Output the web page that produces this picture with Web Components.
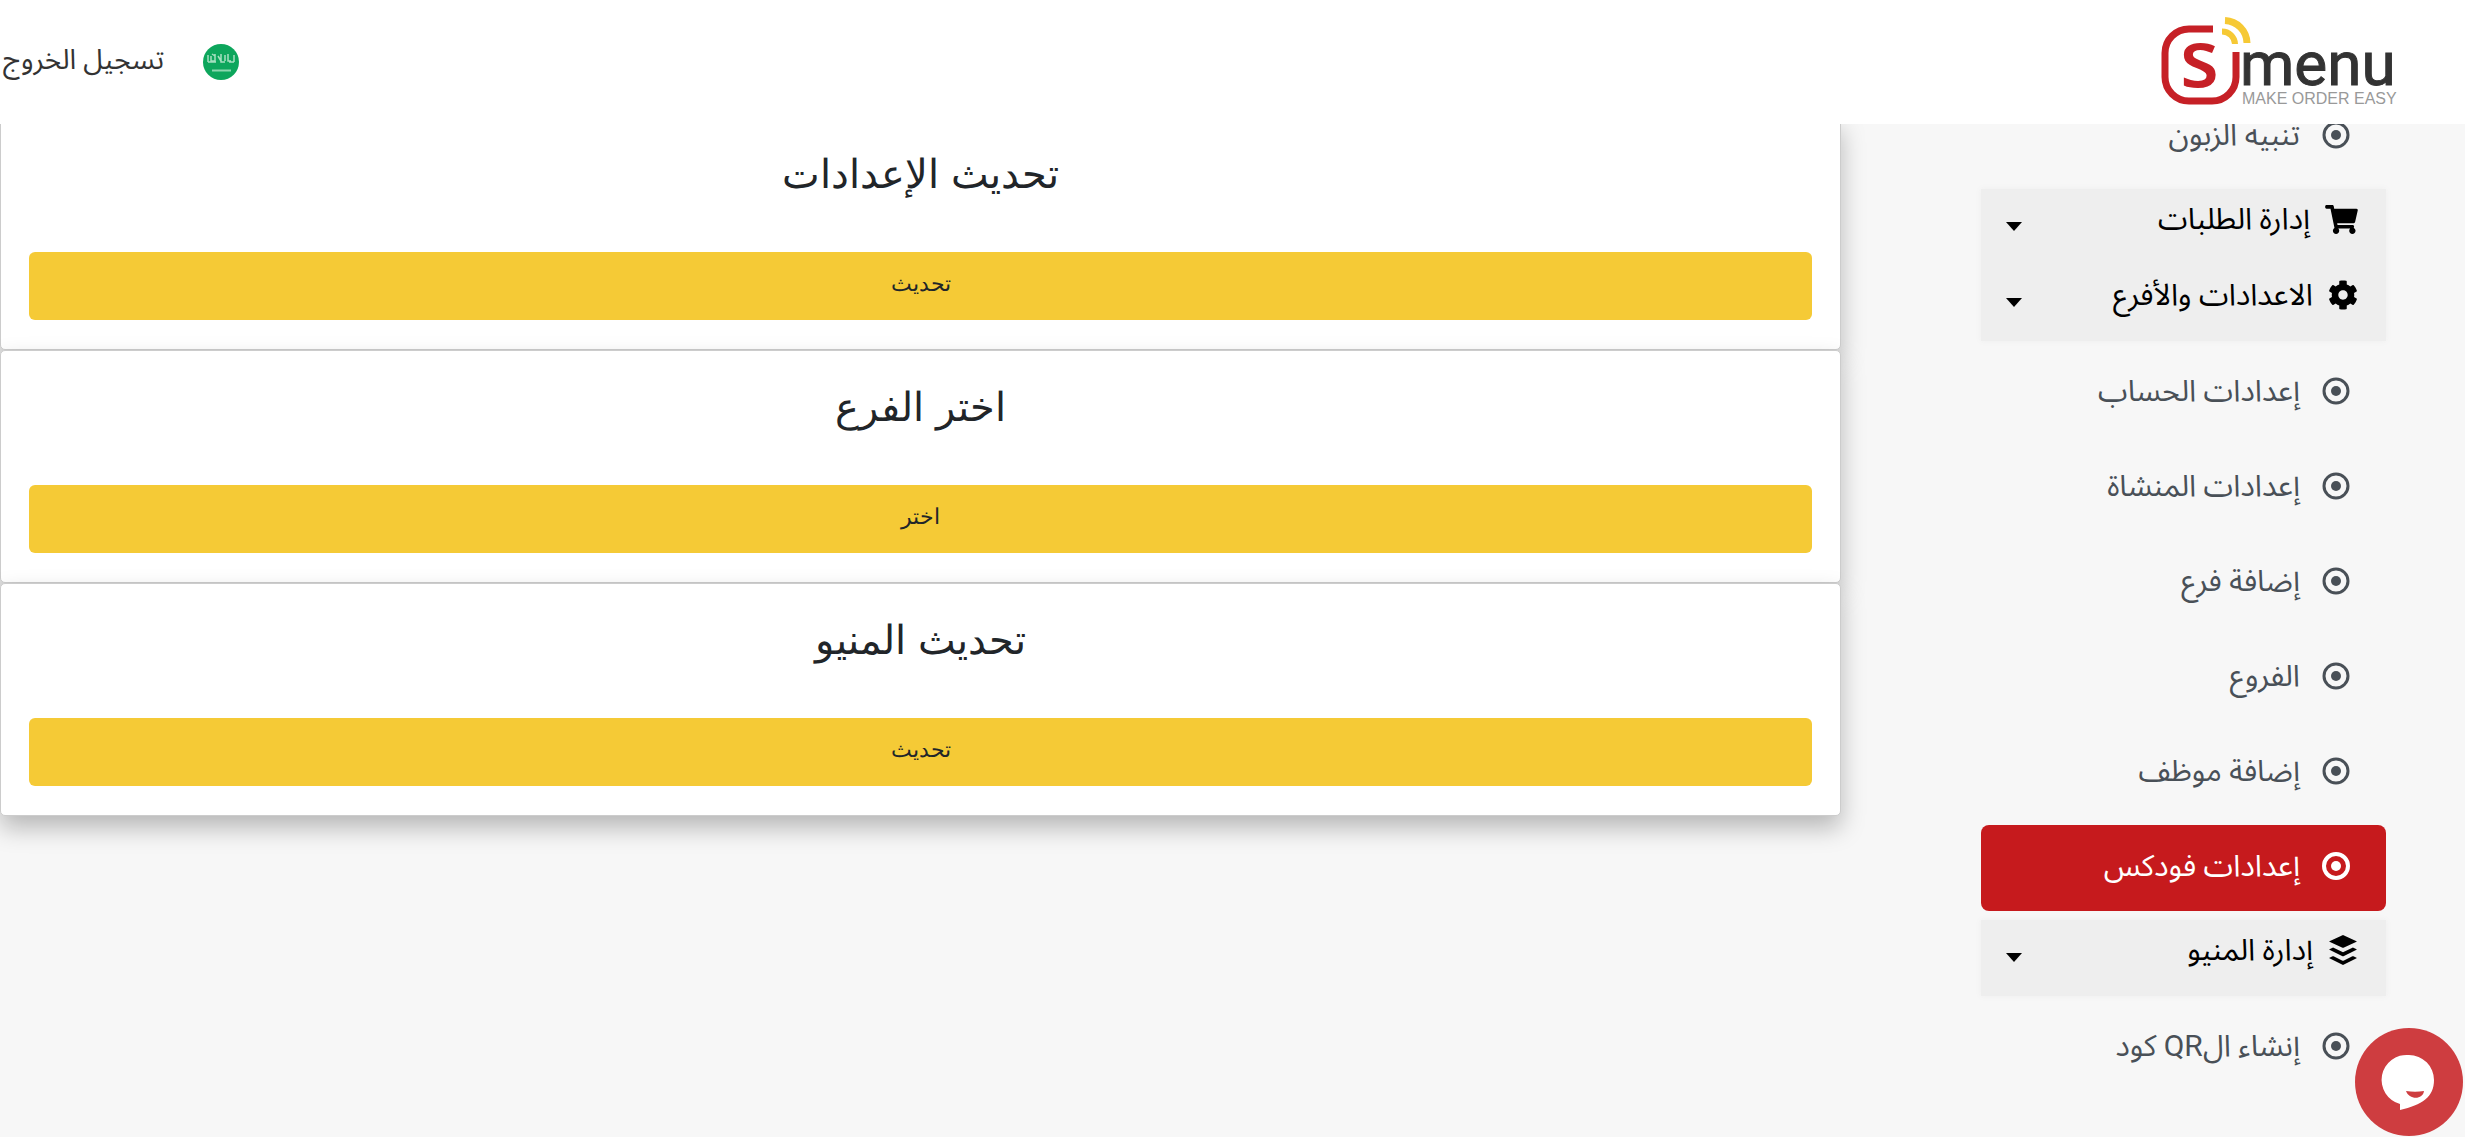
<!DOCTYPE html>
<html lang="ar" dir="rtl">
<head>
  <meta charset="UTF-8">
  <meta name="viewport" content="width=device-width, initial-scale=1.0">
  <title>Smenu</title>
  <style>
    body {
      margin: 0;
      background: #f7f7f7;
      color: #212529;
      font-family: Roboto, "Noto Sans Arabic", "DejaVu Sans", sans-serif;
    }
  </style>
</head>
<body>
  <smenu-header></smenu-header>

  <smenu-layout>
    <smenu-sidebar slot="sidebar">
      <nav-item>تنبيه الزبون</nav-item>
      <nav-group>
        <nav-toggle icon="cart">إدارة الطلبات</nav-toggle>
        <nav-toggle icon="cog">الاعدادات والأفرع</nav-toggle>
      </nav-group>
      <nav-item>إعدادات الحساب</nav-item>
      <nav-item>إعدادات المنشاة</nav-item>
      <nav-item>إضافة فرع</nav-item>
      <nav-item>الفروع</nav-item>
      <nav-item>إضافة موظف</nav-item>
      <nav-item active>إعدادات فودكس</nav-item>
      <nav-group>
        <nav-toggle icon="layers">إدارة المنيو</nav-toggle>
      </nav-group>
      <nav-item>إنشاء الQR كود</nav-item>
    </smenu-sidebar>

    <action-card action="تحديث">تحديث الإعدادات</action-card>
    <action-card action="اختر">اختر الفرع</action-card>
    <action-card action="تحديث">تحديث المنيو</action-card>
  </smenu-layout>

  <chat-bubble></chat-bubble>

  <script>
    const ICONS = {
      cart: `<svg width="33" height="29" viewBox="0 0 576 512"><path d="M528.12 301.319l47.273-208C578.806 78.301 567.391 64 551.99 64H159.208l-9.166-44.81C147.758 8.021 137.93 0 126.529 0H24C10.745 0 0 10.745 0 24v16c0 13.255 10.745 24 24 24h69.883l70.248 343.435C147.325 417.1 136 435.222 136 456c0 30.928 25.072 56 56 56s56-25.072 56-56c0-15.674-6.447-29.835-16.824-40h209.647C430.447 426.165 424 440.326 424 456c0 30.928 25.072 56 56 56s56-25.072 56-56c0-22.172-12.888-41.332-31.579-50.405l5.517-24.276c3.413-15.018-8.002-29.319-23.403-29.319H218.117l-6.545-32h293.145c11.206 0 20.92-7.754 23.403-18.681z"/></svg>`,
      cog: `<svg width="30" height="30" viewBox="0 0 512 512"><path d="M487.4 315.7l-42.6-24.6c4.3-23.2 4.3-47 0-70.2l42.6-24.6c4.9-2.8 7.1-8.6 5.5-14-11.1-35.6-30-67.8-54.7-94.6-3.8-4.1-10-5.1-14.8-2.3L380.8 110c-17.9-15.4-38.5-27.3-60.8-35.1V25.8c0-5.6-3.9-10.5-9.4-11.7-36.7-8.2-74.3-7.8-109.2 0-5.5 1.2-9.4 6.1-9.4 11.7V75c-22.2 7.9-42.8 19.8-60.8 35.1L88.7 85.5c-4.9-2.8-11-1.9-14.8 2.3-24.7 26.7-43.6 58.9-54.7 94.6-1.7 5.4.6 11.2 5.5 14L67.3 221c-4.3 23.2-4.3 47 0 70.2l-42.6 24.6c-4.9 2.8-7.1 8.6-5.5 14 11.1 35.6 30 67.8 54.7 94.6 3.8 4.1 10 5.1 14.8 2.3l42.6-24.6c17.9 15.4 38.5 27.3 60.8 35.1v49.2c0 5.6 3.9 10.5 9.4 11.7 36.7 8.2 74.3 7.8 109.2 0 5.5-1.2 9.4-6.1 9.4-11.7v-49.2c22.2-7.9 42.8-19.8 60.8-35.1l42.6 24.6c4.9 2.8 11 1.9 14.8-2.3 24.7-26.7 43.6-58.9 54.7-94.6 1.5-5.5-.7-11.3-5.6-14.1zM256 336c-44.1 0-80-35.9-80-80s35.9-80 80-80 80 35.9 80 80-35.9 80-80 80z"/></svg>`,
      layers: `<svg width="30" height="34" viewBox="0 0 448 512"><path d="M427.84 380.67l-196.5 97.82a18.6 18.6 0 0 1-14.67 0L20.16 380.67c-4-2-4-5.28 0-7.29L67.22 350a18.65 18.65 0 0 1 14.69 0l134.76 67a18.51 18.51 0 0 0 14.67 0l134.76-67a18.62 18.62 0 0 1 14.68 0l47.06 23.43c4.05 1.96 4.05 5.24 0 7.24zm0-136.53l-47.06-23.43a18.62 18.62 0 0 0-14.68 0l-134.76 67.08a18.68 18.68 0 0 1-14.67 0L81.91 220.71a18.65 18.65 0 0 0-14.69 0l-47.06 23.43c-4 2-4 5.29 0 7.31l196.51 97.8a18.6 18.6 0 0 0 14.67 0l196.5-97.8c4.05-2.02 4.05-5.3 0-7.31zM20.16 130.42l196.5 90.29a20.08 20.08 0 0 0 14.67 0l196.51-90.29c4-1.86 4-4.89 0-6.74L231.33 33.4a19.88 19.88 0 0 0-14.67 0l-196.5 90.28c-4.05 1.85-4.05 4.88 0 6.74z"/></svg>`
    };

    class SmenuHeader extends HTMLElement {
      constructor() {
        super();
        this.attachShadow({ mode: 'open' });
        this.shadowRoot.innerHTML = `
          <style>
            :host {
              position: fixed;
              top: 0;
              left: 0;
              right: 0;
              z-index: 10;
              display: block;
              background: #fff;
            }
            header {
              display: flex;
              justify-content: space-between;
              align-items: center;
              height: 124px;
              padding: 0 68px 0 3px;
            }
            .logo, .logo svg { display: block; }
            .user {
              display: flex;
              align-items: center;
              gap: 39px;
            }
            .user a {
              padding-bottom: 4px;
              color: #333;
              font-size: 28px;
              line-height: 40px;
              text-decoration: none;
            }
            .lang {
              display: block;
              padding: 0;
              border: 0;
              background: none;
              cursor: pointer;
            }
            .lang svg { display: block; }
          </style>
          <header>
            <a class="logo" href="#" aria-label="Smenu">
              <svg width="236" height="124" viewBox="0 -16 236 124" direction="ltr">
                <path d="M52 13H28A24 24 0 0 0 4 37V61A24 24 0 0 0 28 85H51A24 24 0 0 0 75 61V36" fill="none" stroke="#c62026" stroke-width="7"/>
                <path d="M61 15.500A13 13 0 0 1 74 28" fill="none" stroke="#f6c935" stroke-width="6"/>
                <path d="M64 4.500A23 23 0 0 1 86 27" fill="none" stroke="#f6c935" stroke-width="7"/>
                <text x="19" y="71" font-family="Open Sans" font-weight="600" font-size="80" fill="#c62026">s</text>
                <text x="79" y="69" font-family="Roboto" font-size="62" fill="#333" stroke="#333">menu</text>
                <text x="81" y="88" font-family="Liberation Sans" font-size="16" fill="#999">MAKE ORDER EASY</text>
              </svg>
            </a>
            <div class="user">
              <button class="lang" aria-label="العربية">
                <svg width="36" height="36" viewBox="0 0 36 36">
                  <circle cx="18" cy="18" r="18" fill="#0da65c"/>
                  <path d="M5 11v7M8 12v5h4M12 10v8M15 12l3 5M18 10v8h4M22 11v6M25 10v7h3M31 11v7M5 18h8M9 10l3 2M26 18h5" fill="none" stroke="#a5e0c0" stroke-width="1.500"/>
                  <path d="M9 26.500h19" stroke="#8ad6ae" stroke-width="2"/>
                </svg>
              </button>
              <a href="#">تسجيل الخروج</a>
            </div>
          </header>
        `;
      }
    }

    class SmenuLayout extends HTMLElement {
      constructor() {
        super();
        this.attachShadow({ mode: 'open' });
        this.shadowRoot.innerHTML = `
          <style>
            :host {
              display: grid;
              grid-template-columns: 405px minmax(0, 1fr);
              gap: 140px;
              align-items: start;
              padding-right: 79px;
            }
            main { padding-top: 117px; }
          </style>
          <slot name="sidebar"></slot>
          <main><slot></slot></main>
        `;
      }
    }

    class SmenuSidebar extends HTMLElement {
      constructor() {
        super();
        this.attachShadow({ mode: 'open' });
        this.shadowRoot.innerHTML = `
          <style>
            :host { display: block; padding-top: 94px; }
            nav {
              display: flex;
              flex-direction: column;
              gap: 9px;
            }
          </style>
          <nav><slot></slot></nav>
        `;
      }
    }

    class NavItem extends HTMLElement {
      constructor() {
        super();
        this.attachShadow({ mode: 'open' });
        this.shadowRoot.innerHTML = `
          <style>
            :host {
              --ring: 3;
              display: block;
              color: #495057;
            }
            :host([active]) {
              --ring: 4;
              color: #fff;
            }
            a {
              display: flex;
              align-items: center;
              gap: 22px;
              box-sizing: border-box;
              height: 86px;
              padding: 0 36px 4px;
              border-radius: 8px;
              color: inherit;
              font-size: 30px;
              line-height: 40px;
              text-decoration: none;
            }
            :host([active]) a { background: #c61a1d; }
            .ring { stroke-width: var(--ring); }
          </style>
          <a href="#">
            <svg width="28" height="28" viewBox="0 0 28 28">
              <circle class="ring" cx="14" cy="14" r="12" fill="none" stroke="currentColor"/>
              <circle cx="14" cy="14" r="5" fill="currentColor"/>
            </svg>
            <span><slot></slot></span>
          </a>
        `;
      }
    }

    class NavGroup extends HTMLElement {
      constructor() {
        super();
        this.attachShadow({ mode: 'open' });
        this.shadowRoot.innerHTML = `
          <style>
            :host {
              display: block;
              background: #eee;
              box-shadow: 0 0 6px #eee;
            }
          </style>
          <slot></slot>
        `;
      }
    }

    class NavToggle extends HTMLElement {
      constructor() {
        super();
        this.attachShadow({ mode: 'open' });
      }

      connectedCallback() {
        this.shadowRoot.innerHTML = `
          <style>
            :host { display: block; }
            button {
              display: flex;
              align-items: center;
              gap: 16px;
              width: 100%;
              height: 76px;
              padding: 0 28px 0 24px;
              border: 0;
              background: none;
              color: #000;
              font: inherit;
              font-size: 30px;
              line-height: 40px;
              cursor: pointer;
            }
            .label {
              display: flex;
              align-items: center;
              gap: 15px;
              flex: 1;
              padding-bottom: 16px;
            }
            svg { fill: currentColor; }
          </style>
          <button aria-expanded="false">
            <span class="label">
              ${ICONS[this.getAttribute('icon')]}
              <span><slot></slot></span>
            </span>
            <svg width="18" height="10" viewBox="0 0 18 10"><path d="M1 0h16l-8 9z"/></svg>
          </button>
        `;
      }
    }

    class ActionCard extends HTMLElement {
      constructor() {
        super();
        this.attachShadow({ mode: 'open' });
      }

      connectedCallback() {
        this.shadowRoot.innerHTML = `
          <style>
            :host {
              display: block;
              padding: 30px 28px 29px;
              border: 1px solid #ccc;
              border-radius: 5px;
              background: #fff;
              box-shadow: 0 12px 24px rgba(0, 0, 0, 0.26);
              font-family: "Liberation Sans", sans-serif;
              text-align: center;
            }
            h2 {
              margin: 0 0 52px;
              font-size: 40px;
              font-weight: 400;
              line-height: 52px;
            }
            :host, h2, button { color: #212529; }
            button {
              display: block;
              width: 100%;
              height: 68px;
              padding: 0 0 4px;
              border: 0;
              border-radius: 6px;
              background: #f5ca36;
              font: inherit;
              font-size: 22px;
              line-height: 36px;
              cursor: pointer;
            }
          </style>
          <h2><slot></slot></h2>
          <button>${this.getAttribute('action')}</button>
        `;
      }
    }

    class ChatBubble extends HTMLElement {
      constructor() {
        super();
        this.attachShadow({ mode: 'open' });
        this.shadowRoot.innerHTML = `
          <style>
            :host {
              position: fixed;
              right: 2px;
              bottom: 1px;
              z-index: 20;
            }
            button {
              display: block;
              width: 108px;
              height: 108px;
              padding: 0;
              border: 0;
              border-radius: 50%;
              background: #ce3d40;
              cursor: pointer;
            }
            svg { display: block; }
          </style>
          <button aria-label="محادثة">
            <svg width="108" height="108" viewBox="0 0 108 108">
              <path d="M54 27a25 25 0 0 1 25 25c0 17-12 25-34 30v-6a25 25 0 0 1 9-49z" fill="#fff"/>
              <path d="M51 63c6 1 12 1 18 0-1 9-15 9-18 0z" fill="#ce3d40"/>
            </svg>
          </button>
        `;
      }
    }

    customElements.define('smenu-header', SmenuHeader);
    customElements.define('smenu-layout', SmenuLayout);
    customElements.define('smenu-sidebar', SmenuSidebar);
    customElements.define('nav-item', NavItem);
    customElements.define('nav-group', NavGroup);
    customElements.define('nav-toggle', NavToggle);
    customElements.define('action-card', ActionCard);
    customElements.define('chat-bubble', ChatBubble);
  </script>
</body>
</html>
